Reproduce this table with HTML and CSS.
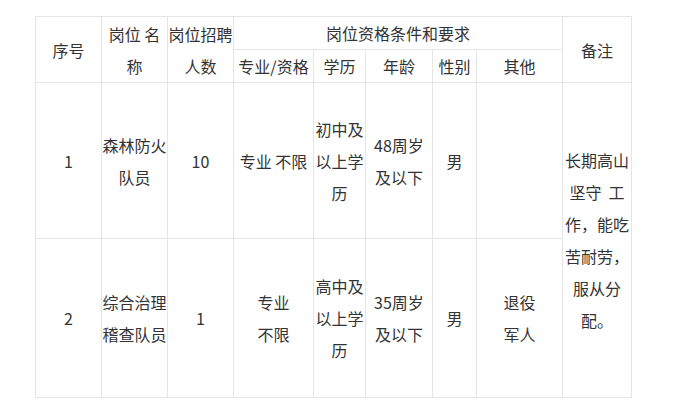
FILE: index.html
```html
<!DOCTYPE html>
<html lang="zh-CN">
<head>
<meta charset="utf-8">
<link rel="stylesheet" href="styles.css">
</head>
<body>
<table class="jobs">
  <colgroup>
    <col class="c-no">
    <col class="c-name">
    <col class="c-count">
    <col class="c-major">
    <col class="c-edu">
    <col class="c-age">
    <col class="c-sex">
    <col class="c-other">
    <col class="c-note">
  </colgroup>
  <tr class="h1">
    <td rowspan="2">序号</td>
    <td rowspan="2">岗位 名称</td>
    <td rowspan="2">岗位招聘人数</td>
    <td colspan="5">岗位资格条件和要求</td>
    <td rowspan="2">备注</td>
  </tr>
  <tr class="h2">
    <td>专业/资格</td>
    <td>学历</td>
    <td>年龄</td>
    <td>性别</td>
    <td>其他</td>
  </tr>
  <tr class="r1">
    <td>1</td>
    <td>森林防火队员</td>
    <td>10</td>
    <td>专业 不限</td>
    <td>初中及以上学历</td>
    <td>48周岁<br>及以下</td>
    <td>男</td>
    <td></td>
    <td rowspan="2">长期高山坚守&nbsp;&nbsp;工作，能吃苦耐劳，服从分配。</td>
  </tr>
  <tr class="r2">
    <td>2</td>
    <td>综合治理稽查队员</td>
    <td>1</td>
    <td>专业<br>不限</td>
    <td>高中及以上学历</td>
    <td>35周岁<br>及以下</td>
    <td>男</td>
    <td>退役<br>军人</td>
  </tr>
</table>
</body>
</html>
```

FILE: styles.css
```css
html, body {
  margin: 0;
  background: #fff;
}
body {
  padding: 16px 0 0 35px;
  font-family: "Noto Sans CJK SC", "Microsoft YaHei", sans-serif;
  font-size: 16px;
  color: #333;
}
.jobs {
  border-collapse: collapse;
  table-layout: fixed;
  width: 597px;
}
.jobs td {
  border: 1px solid #e5e5e5;
  padding: 0;
  line-height: 32px;
  text-align: center;
  vertical-align: middle;
  word-break: break-all;
}
.c-no { width: 66px; }
.c-name { width: 66px; }
.c-count { width: 66px; }
.c-major { width: 80px; }
.c-edu { width: 52px; }
.c-age { width: 67px; }
.c-sex { width: 44px; }
.c-other { width: 86px; }
.c-note { width: 69px; }
.h1, .h2 { height: 33px; }
.r1 { height: 156px; }
.r2 { height: 159px; }
```
